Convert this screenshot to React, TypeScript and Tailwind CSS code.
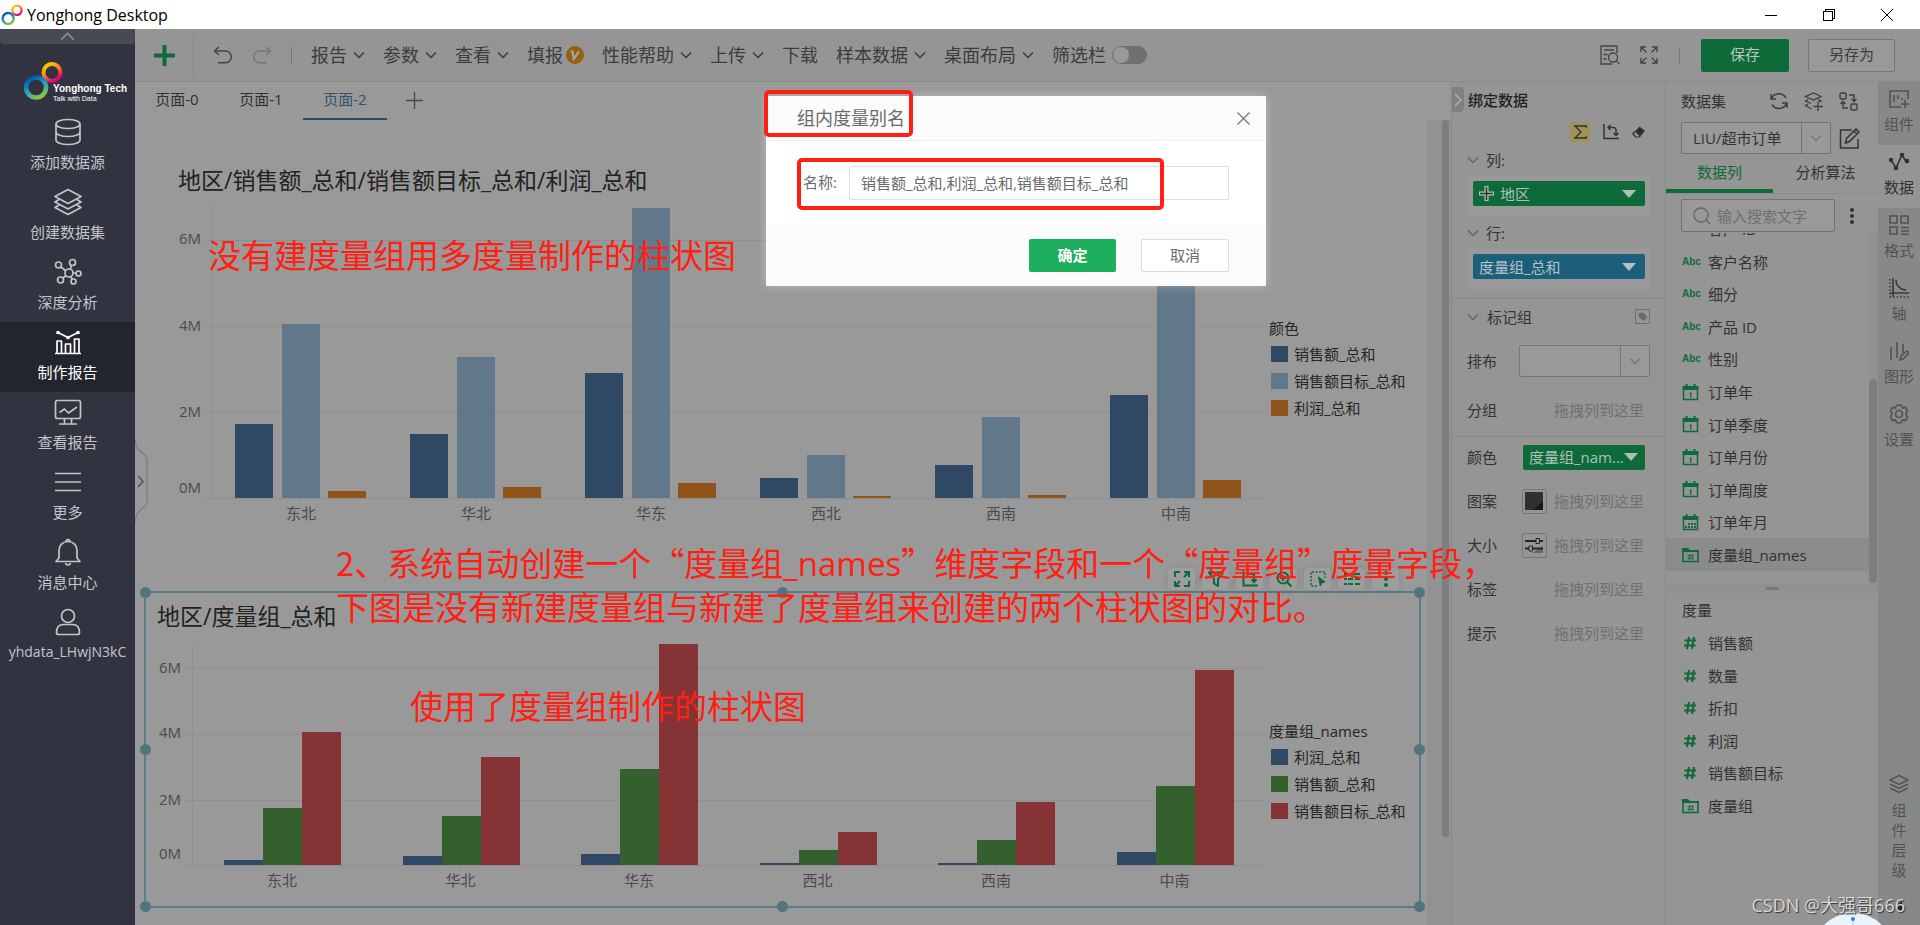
import type { ReactNode } from 'react';

const GREEN = '#0f6a39';

const sideItems = [
  { label: '添加数据源', icon: 'db' },
  { label: '创建数据集', icon: 'layers' },
  { label: '深度分析', icon: 'nodes' },
  { label: '制作报告', icon: 'chart', active: true },
  { label: '查看报告', icon: 'monitor' },
  { label: '更多', icon: 'menu' },
  { label: '消息中心', icon: 'bell' },
];

const menus = [
  { label: '报告', arrow: true },
  { label: '参数', arrow: true },
  { label: '查看', arrow: true },
  { label: '填报', badge: true },
  { label: '性能帮助', arrow: true },
  { label: '上传', arrow: true },
  { label: '下载' },
  { label: '样本数据', arrow: true },
  { label: '桌面布局', arrow: true },
];

const dimensions = [
  { label: '客户 ID', icon: 'abc' },
  { label: '客户名称', icon: 'abc' },
  { label: '细分', icon: 'abc' },
  { label: '产品 ID', icon: 'abc' },
  { label: '性别', icon: 'abc' },
  { label: '订单年', icon: 'date' },
  { label: '订单季度', icon: 'date' },
  { label: '订单月份', icon: 'date' },
  { label: '订单周度', icon: 'date' },
  { label: '订单年月', icon: 'month' },
  { label: '度量组_names', icon: 'group', active: true },
];

const measures = [
  { label: '销售额', icon: 'num' },
  { label: '数量', icon: 'num' },
  { label: '折扣', icon: 'num' },
  { label: '利润', icon: 'num' },
  { label: '销售额目标', icon: 'num' },
  { label: '度量组', icon: 'group' },
];

const railItems = [
  { label: '组件', icon: 'widget' },
  { label: '数据', icon: 'data', active: true },
  { label: '格式', icon: 'format' },
  { label: '轴', icon: 'axis' },
  { label: '图形', icon: 'graph' },
  { label: '设置', icon: 'gear' },
];

type Chart = {
  width: number;
  height: number;
  axisX: number;
  right: number;
  base: number;
  grid: { label: string; y: number; textY: number }[];
  first: number;
  pitch: number;
  offsets: number[];
  barWidth: number;
  colors: string[];
  // bar heights per region, in px above the base line
  bars: number[][];
};

const regions = ['东北', '华北', '华东', '西北', '西南', '中南'];

const topChart: Chart = {
  width: 1090,
  height: 325,
  axisX: 37,
  right: 1089,
  base: 298,
  grid: [
    { label: '6M', y: 40, textY: 44 },
    { label: '4M', y: 126, textY: 131 },
    { label: '2M', y: 212, textY: 217 },
    { label: '0M', y: 298, textY: 293 },
  ],
  first: 125,
  pitch: 175,
  offsets: [-65, -18, 28],
  barWidth: 38,
  colors: ['#2f4863', '#61788b', '#90541a'],
  bars: [
    [74, 174, 7],
    [64, 141, 11],
    [125, 290, 15],
    [20, 43, 2],
    [33, 81, 3],
    [103, 256, 18],
  ],
};

const bottomChart: Chart = {
  width: 1110,
  height: 250,
  axisX: 37,
  right: 1110,
  base: 226,
  grid: [
    { label: '6M', y: 29, textY: 34 },
    { label: '4M', y: 95, textY: 99 },
    { label: '2M', y: 161, textY: 166 },
    { label: '0M', y: 226, textY: 220 },
  ],
  first: 126,
  pitch: 178.5,
  offsets: [-57, -18, 21],
  barWidth: 39,
  colors: ['#2f4863', '#34602d', '#853335'],
  bars: [
    [5, 57, 133],
    [9, 49, 108],
    [11, 96, 221],
    [2, 15, 33],
    [2, 25, 63],
    [13, 79, 195],
  ],
};

function BarChart({ chart, label }: { chart: Chart; label: string }) {
  return (
    <svg width={chart.width} height={chart.height} role="img" aria-label={label} className="block shrink-0">
      <g stroke="#8f8f8f" shapeRendering="crispEdges">
        <path d={`M${chart.axisX} 6V${chart.base}`} />
        {chart.grid.map((line) => (
          <path key={line.label} d={`M${chart.axisX - 6} ${line.y}H${chart.right}`} />
        ))}
      </g>
      <g fill="#4b4b4b" fontSize="15">
        {chart.grid.map((line) => (
          <text key={line.label} x="4" y={line.textY}>
            {line.label}
          </text>
        ))}
      </g>
      {regions.map((region, i) => {
        const center = chart.first + chart.pitch * i;
        return (
          <g key={region}>
            <path d={`M${Math.round(center)} ${chart.base}v5`} stroke="#8f8f8f" shapeRendering="crispEdges" />
            {chart.bars[i].map((h, j) => (
              <rect
                key={j}
                x={Math.round(center + chart.offsets[j])}
                y={chart.base - h}
                width={chart.barWidth}
                height={h}
                fill={chart.colors[j]}
              />
            ))}
            <text x={center + 1} y={chart.base + 21} textAnchor="middle" fontSize="15" fill="#4b4b4b">
              {region}
            </text>
          </g>
        );
      })}
    </svg>
  );
}

function Legend({ title, items }: { title: string; items: { label: string; color: string }[] }) {
  return (
    <div className="text-[15px] leading-5 whitespace-nowrap text-[#262626]">
      <p className="mb-2 leading-4">{title}</p>
      <ul className="flex flex-col gap-[7px]">
        {items.map((item) => (
          <li key={item.label} className="flex items-center gap-1.5 pl-0.5">
            <span className="h-4 w-[17px]" style={{ backgroundColor: item.color }} />
            {item.label}
          </li>
        ))}
      </ul>
    </div>
  );
}

function Chevron({ className = '', size = 12 }: { className?: string; size?: number }) {
  return (
    <svg width={size} height={size} viewBox="0 0 12 12" fill="none" stroke="currentColor" strokeWidth="1.5" className={className}>
      <path d="M1 3.5l5 5 5-5" />
    </svg>
  );
}

function Caret() {
  return (
    <svg width="14" height="8" viewBox="0 0 14 8" fill="currentColor">
      <path d="M0 0h14L7 8z" />
    </svg>
  );
}

function Rings({ size, id }: { size: number; id: string }) {
  return (
    <svg width={size} height={size} viewBox="0 0 40 40" fill="none">
      <defs>
        <linearGradient id={`${id}-a`} x1="0" y1="0" x2="0.6" y2="1">
          <stop offset="0" stopColor="#ffd800" />
          <stop offset="0.45" stopColor="#f7941d" />
          <stop offset="1" stopColor="#e4006d" />
        </linearGradient>
        <linearGradient id={`${id}-b`} x1="0.2" y1="0" x2="0.7" y2="1">
          <stop offset="0" stopColor="#0054a5" />
          <stop offset="0.5" stopColor="#1f9fc4" />
          <stop offset="1" stopColor="#8cc63f" />
        </linearGradient>
      </defs>
      <circle cx="29" cy="11.5" r="8.5" stroke={`url(#${id}-a)`} strokeWidth="4" />
      <circle cx="13" cy="26.5" r="10" stroke={`url(#${id}-b)`} strokeWidth="4.5" />
    </svg>
  );
}

function SideIcon({ name }: { name: string }) {
  const shapes: Record<string, ReactNode> = {
    db: (
      <>
        <ellipse cx="14" cy="6" rx="12" ry="4.5" />
        <path d="M2 6v16c0 2.5 5.4 4.5 12 4.5s12-2 12-4.5V6M2 14c0 2.5 5.4 4.5 12 4.5s12-2 12-4.5" />
      </>
    ),
    layers: (
      <>
        <path d="M14 1.5l13 7-13 7-13-7z" />
        <path d="M5 11.5l-4 2.5 13 7 13-7-4-2.5M5 17l-4 2.5 13 7 13-7-4-2.5" />
      </>
    ),
    nodes: (
      <>
        <circle cx="15" cy="15" r="4" />
        <circle cx="4.5" cy="7" r="3" />
        <circle cx="18.5" cy="4.5" r="3" />
        <circle cx="24.5" cy="15.5" r="2.5" />
        <circle cx="6.5" cy="22" r="3" />
        <circle cx="19.5" cy="23.5" r="2.5" />
        <path d="M7 9l5 4M17.5 7.5l-1.5 4M19 15h3M9 20l3-2.5M16.5 18.5l2 3" />
      </>
    ),
    chart: (
      <>
        <path d="M1 25.5h26M3 25V13h4.5v12M11.5 25v-9h5v9M20.5 25V11H25v14" />
        <path d="M4 4.5l10 5 10-5" />
        <circle cx="4" cy="4.5" r="1" fill="currentColor" />
        <circle cx="14" cy="9.5" r="1" fill="currentColor" />
        <circle cx="24" cy="4.5" r="1" fill="currentColor" />
      </>
    ),
    monitor: (
      <>
        <rect x="1.5" y="2.5" width="25" height="18" rx="2" />
        <path d="M5.5 14.5l5-3.5 4 4 8.5-6M10.5 20.5v5M17.5 20.5v5M5 26h18" />
      </>
    ),
    menu: <path d="M1 5.500h26M1 14h26M1 22.500h26" />,
    bell: (
      <>
        <path d="M5 20v-8c0-4.5 3.5-8.5 9-8.5s9 4 9 8.5v8l3 3.5H2zM12 3.5c0-2.5 4-2.5 4 0" />
        <path d="M11.5 25c.5 2.5 4.5 2.5 5 0" />
      </>
    ),
    user: (
      <>
        <circle cx="14" cy="8" r="6.5" />
        <path d="M2.5 24.5c0-5.5 3-8 7-8h9c4 0 7 2.5 7 8 0 1-.5 2-2 2h-19c-1.5 0-2-1-2-2z" />
      </>
    ),
  };
  return (
    <svg width="28" height="28" viewBox="0 0 28 28" fill="none" stroke="currentColor" strokeWidth="1.7" strokeLinejoin="round">
      {shapes[name]}
    </svg>
  );
}

function Sidebar() {
  return (
    <nav className="flex w-[135px] shrink-0 flex-col bg-[#313440] text-[#c3c4c8]">
      <button aria-label="收起" className="flex h-[15px] items-center justify-center rounded-b-sm bg-[#474a55] text-[#85878f]">
        <Chevron className="rotate-180" size={15} />
      </button>
      <div className="relative flex h-[68px] items-start pt-[17px] pl-[23px]">
        <Rings size={40} id="logo" />
        <div className="absolute top-[40px] left-[53px] whitespace-nowrap text-white">
          <p className="font-['Liberation_Sans_Narrow','Liberation_Sans'] text-[10px] leading-[10px] font-bold">Yonghong Tech</p>
          <p className="font-['Liberation_Sans'] text-[7px] leading-[9px]">Talk with Data</p>
        </div>
      </div>
      {sideItems.map((item) => (
        <a
          key={item.label}
          href="#"
          className={
            item.active
              ? 'flex h-[70px] flex-col items-center gap-1.5 bg-[#22252e] pt-1.5 text-[15px] leading-5 text-white'
              : 'flex h-[70px] flex-col items-center gap-1.5 pt-1.5 text-[15px] leading-5'
          }
        >
          <SideIcon name={item.icon} />
          {item.label}
        </a>
      ))}
      <a href="#" className="flex h-[70px] flex-col items-center gap-1.5 pt-1.5 text-sm leading-5">
        <SideIcon name="user" />
        yhdata_LHwjN3kC
      </a>
    </nav>
  );
}

function Toolbar() {
  return (
    <header className="flex h-[53px] shrink-0 items-center border-b border-[#8a8a8a] bg-[#959595] text-lg text-[#3c3c3c]">
      <button aria-label="新建" className="flex h-11 w-[59px] items-center justify-center border-r border-[#898989] text-[#0f6a39]">
        <svg width="21" height="21" viewBox="0 0 21 21" stroke="currentColor" strokeWidth="4">
          <path d="M0 10.5h21M10.5 0v21" />
        </svg>
      </button>
      <button aria-label="撤销" className="ml-[19px]">
        <svg width="20" height="18" viewBox="0 0 20 18" fill="none" stroke="#454545" strokeWidth="1.5">
          <path d="M6 1L1.5 5 6 9M2 5h10.500a5.800 5.800 0 010 11.700H5" />
        </svg>
      </button>
      <button aria-label="重做" className="ml-[19px]">
        <svg width="20" height="18" viewBox="0 0 20 18" fill="none" stroke="#777" strokeWidth="1.5">
          <path d="M14 1l4.500 4L14 9M18 5H7.500a5.800 5.800 0 000 11.700H15" />
        </svg>
      </button>
      <span className="mx-[19px] h-[17px] w-px bg-[#777]" />
      <div className="flex items-center gap-[18px] whitespace-nowrap">
        {menus.map((menu) => (
          <button key={menu.label} className="flex items-center">
            {menu.label}
            {menu.arrow && <Chevron className="ml-1.5" />}
            {menu.badge && (
              <svg width="18" height="18" viewBox="0 0 18 18" className="ml-[3px]">
                <circle cx="9" cy="9" r="9" fill="#96600f" />
                <path d="M4.500 5.500h2l1.200 7.500 5.300-7.500" fill="none" stroke="#a5a5a0" strokeWidth="2.200" />
              </svg>
            )}
          </button>
        ))}
        <label className="flex items-center gap-1.5">
          筛选栏
          <input type="checkbox" role="switch" className="peer sr-only" />
          <span className="flex h-[18px] w-[35px] items-center rounded-full bg-[#707070] p-px">
            <span className="size-4 rounded-full bg-[#999]" />
          </span>
        </label>
      </div>
      <div className="ml-auto flex items-center pr-[25px]">
        <button aria-label="预览">
          <svg width="20" height="20" viewBox="0 0 20 20" fill="none" stroke="#444" strokeWidth="1.300">
            <path d="M17 8V1H1v18h11M4 5h10M3.500 9.500h4M3.500 14h3" />
            <circle cx="13" cy="12.5" r="4.5" />
            <path d="M16.500 16l3 3" />
          </svg>
        </button>
        <button aria-label="全屏" className="ml-5">
          <svg width="18" height="18" viewBox="0 0 18 18" fill="none" stroke="#444" strokeWidth="1.400">
            <path d="M1 6V1h5M1 1l5.500 5.500M12 1h5v5M17 1l-5.500 5.500M1 12v5h5M1 17l5.500-5.500M12 17h5v-5M17 17l-5.500-5.500" />
          </svg>
        </button>
        <span className="mx-[21px] h-[17px] w-px bg-[#7a7a7a]" />
        <button className="h-[33px] w-[88px] rounded-xs bg-[#0f6a39] text-[15px] text-[#b9c7be]">保存</button>
        <button className="ml-[19px] h-[33px] w-[87px] rounded-xs border border-[#777] bg-[#999] text-[15px]">另存为</button>
      </div>
    </header>
  );
}

const chartTools: { name: string; shape: ReactNode }[] = [
  {
    name: '放大',
    shape: <path d="M1 6V1h5M10 1h5v5M15 10v5h-5M6 15H1v-5M10 6l4-4M6 10l-4 4" />,
  },
  { name: '筛选', shape: <path d="M1 1.500h14L10 8v7l-4-2.500V8z" /> },
  { name: '坐标轴', shape: <path d="M1.500 0v14.500H16M5 3h7v8M9.500 8.500L12 11l2.500-2.500" /> },
  {
    name: '缩放',
    shape: (
      <>
        <circle cx="7" cy="7" r="5.500" />
        <path d="M11 11l4.500 4.500M7 4v6M4 7h6" />
      </>
    ),
  },
  {
    name: '选择',
    shape: (
      <>
        <path d="M7 15H1V1h14v6" strokeDasharray="2 1.500" strokeWidth="1.500" />
        <path d="M8.500 6l6.500 5-3 .7-1.700 3.300z" fill="currentColor" strokeWidth="1" />
      </>
    ),
  },
  { name: '列表', shape: <path d="M0 3h3M4 3h12M0 8h3M4 8h5M11 8h5M0 13h3M4 13h5M11 13h5" /> },
  {
    name: '更多',
    shape: (
      <g fill="currentColor" stroke="none">
        <circle cx="8" cy="2" r="2" />
        <circle cx="8" cy="8" r="2" />
        <circle cx="8" cy="14" r="2" />
      </g>
    ),
  },
];

const handles = [
  '-top-1.5 -left-1.5',
  '-top-1.5 left-1/2 -ml-1.5',
  '-top-1.5 -right-1.5',
  'top-1/2 -left-1.5 -mt-1.5',
  'top-1/2 -right-1.5 -mt-1.5',
  '-bottom-1.5 -left-1.5',
  '-bottom-1.5 left-1/2 -ml-1.5',
  '-bottom-1.5 -right-1.5',
];

function Canvas() {
  return (
    <main className="relative flex min-w-0 flex-1 flex-col bg-[#999]">
      <div className="flex h-[38px] shrink-0 text-[15px] text-[#303030]">
        {['页面-0', '页面-1', '页面-2'].map((tab, i) => (
          <button
            key={tab}
            className={
              i === 2
                ? 'w-[84px] border-b-2 border-[#2d4a68] pb-0.5 text-[#34506e]'
                : 'w-[84px] pb-1'
            }
          >
            {tab}
          </button>
        ))}
        <button aria-label="添加页面" className="ml-[19px] pb-0.5">
          <svg width="17" height="17" viewBox="0 0 17 17" stroke="#484848" strokeWidth="1.300">
            <path d="M0 8.500h17M8.500 0v17" />
          </svg>
        </button>
      </div>
      <div className="flex min-h-0 flex-1">
        <div className="relative min-w-0 flex-1">
          <section className="absolute top-[43px] left-[43px]">
            <h2 className="text-[23px] leading-[34px] text-[#222]">地区/销售额_总和/销售额目标_总和/利润_总和</h2>
            <div className="-ml-[3px] flex gap-1 pt-[3px]">
              <BarChart chart={topChart} label="地区销售额" />
              <div className="pt-[120px]">
                <Legend
                  title="颜色"
                  items={[
                    { label: '销售额_总和', color: '#2f4863' },
                    { label: '销售额目标_总和', color: '#61788b' },
                    { label: '利润_总和', color: '#90541a' },
                  ]}
                />
              </div>
            </div>
          </section>

          <section className="absolute top-[471px] left-[9px] h-[317px] w-[1277px] border-2 border-[#5a7d87]">
            <h2 className="pt-1.5 pl-[11px] text-[23px] leading-[34px] text-[#222]">地区/度量组_总和</h2>
            <div className="flex gap-1 pt-1.5 pl-[9px]">
              <BarChart chart={bottomChart} label="地区度量组" />
              <div className="pt-[84px]">
                <Legend
                  title="度量组_names"
                  items={[
                    { label: '利润_总和', color: '#2f4863' },
                    { label: '销售额_总和', color: '#34602d' },
                    { label: '销售额目标_总和', color: '#853335' },
                  ]}
                />
              </div>
            </div>
            {handles.map((pos) => (
              <span key={pos} className={`absolute size-[11px] rounded-full bg-[#50757f] ${pos}`} />
            ))}
            <div className="absolute -top-[25px] right-5 flex gap-[7px]">
              {chartTools.map((tool) => (
                <button
                  key={tool.name}
                  aria-label={tool.name}
                  className="flex h-[22px] w-[27px] items-center justify-center rounded-sm bg-[#9d9d9d] text-[#0f6a39] shadow-[0_0_6px_rgba(0,0,0,0.12)]"
                >
                  <svg width="16" height="16" viewBox="0 0 16 16" fill="none" stroke="currentColor" strokeWidth="2">
                    {tool.shape}
                  </svg>
                </button>
              ))}
            </div>
          </section>
        </div>
        <div className="w-6 shrink-0 bg-[#929292] pl-[15px]">
          <div className="h-[717px] w-[7px] rounded-full bg-[#7e7e7e]" />
        </div>
      </div>
      <svg width="14" height="82" viewBox="0 0 14 82" fill="none" className="absolute top-[358px] left-0">
        <path d="M0 0c1 14 12 12 12 20v42c0 6-11 6-12 20" stroke="#7b7d84" strokeWidth="1.200" />
        <path d="M3 36l5 5.500L3 47" stroke="#555" strokeWidth="1.500" />
      </svg>
    </main>
  );
}

function DropRow({ label, children }: { label: string; children?: ReactNode }) {
  return (
    <div className="flex h-11 items-center pr-[21px] pl-[15px]">
      <span>{label}</span>
      <div className="ml-auto flex items-center gap-[7px]">
        {children}
        <span className="text-[#707070]">拖拽列到这里</span>
      </div>
    </div>
  );
}

function BindPanel() {
  return (
    <aside className="relative w-[214px] shrink-0 border-l border-[#8a8a8a] bg-[#959595] text-[15px] leading-5 whitespace-nowrap text-[#333]">
      <button aria-label="收起面板" className="absolute top-[5px] left-0 flex h-[25px] w-3 items-center justify-center rounded-r-sm bg-[#808080] text-[#aaa]">
        <Chevron className="shrink-0 -rotate-90" size={14} />
      </button>
      <h3 className="pt-2 pl-4 font-medium text-[#222]">绑定数据</h3>
      <div className="mt-2.5 flex h-6 items-center justify-end gap-[13px] pr-5">
        <button aria-label="汇总" className="flex size-5 items-center justify-center rounded-xs bg-[#a09157]">
          <svg width="13" height="14" viewBox="0 0 13 14" fill="none" stroke="#333" strokeWidth="1.400">
            <path d="M12.500 3V1H1l6 6-6 6h11.500v-2" />
          </svg>
        </button>
        <button aria-label="转置">
          <svg width="16" height="16" viewBox="0 0 16 16" fill="none" stroke="#333" strokeWidth="1.500">
            <path d="M1 0v14.500h15M5 3.500h5.500a2.500 2.500 0 012.500 2.500v5M7.500 1L5 3.500 7.500 6M10.500 9l2.500 2.500L15.500 9" />
          </svg>
        </button>
        <button aria-label="清除">
          <svg width="13" height="12" viewBox="0 0 13 12">
            <path d="M7.500 0.500l5.500 4.500-5 5.500L3 5.500z" fill="#2e2e2e" />
            <path d="M3 5.500L.8 8l3 3h3.500l1-1" fill="none" stroke="#2e2e2e" strokeWidth="1.200" />
          </svg>
        </button>
      </div>
      <div className="flex items-center gap-[7px] pt-1.5 pl-[15px]">
        <Chevron className="text-[#666]" />
        列:
      </div>
      <div className="mt-1.5 mr-[15px] ml-4 h-[41px] rounded-xs bg-[#999] p-[5px]">
        <button className="flex h-[25px] w-full items-center rounded-xs bg-[#0f6a39] px-1.5 text-[#aebfb5]">
          <svg width="15" height="15" viewBox="0 0 15 15" className="mr-1.5">
            <path d="M0 7.500h15M7.500 0v15" stroke="#b5c3bb" strokeWidth="4" />
            <path d="M1 7.500h13M7.500 1v13" stroke="#1d3b2a" strokeWidth="1.500" />
          </svg>
          地区
          <span className="mr-[3px] ml-auto">
            <Caret />
          </span>
        </button>
      </div>
      <div className="flex items-center gap-[7px] pt-1.5 pl-[15px]">
        <Chevron className="text-[#666]" />
        行:
      </div>
      <div className="mt-1.5 mr-[15px] ml-4 h-[41px] rounded-xs bg-[#999] p-[5px]">
        <button className="flex h-[25px] w-full items-center rounded-xs bg-[#1b5f7a] px-1.5 text-[#b3c2c9]">
          度量组_总和
          <span className="mr-[3px] ml-auto">
            <Caret />
          </span>
        </button>
      </div>
      <div className="mt-2 flex h-9 items-center gap-2 border-t border-[#898989] pr-[15px] pl-[15px]">
        <Chevron className="text-[#666]" />
        标记组
        <svg width="15" height="15" viewBox="0 0 15 15" className="ml-auto">
          <rect x=".5" y=".5" width="14" height="14" fill="none" stroke="#6f6f6f" />
          <path d="M3.500 4l4.500-.5 4.500 4.500-4 4-4.500-4z" fill="#6a6a6a" />
        </svg>
      </div>
      <div className="flex h-[54px] items-center pr-[15px] pl-[15px]">
        <label htmlFor="arrange">排布</label>
        <div className="relative ml-auto flex h-8 w-[131px] rounded-xs border border-[#767676] bg-[#999]">
          <select id="arrange" className="w-full appearance-none bg-transparent">
            <option />
          </select>
          <span className="pointer-events-none absolute top-0 right-0 flex h-full w-[29px] items-center justify-center border-l border-[#767676] text-[#777]">
            <Chevron />
          </span>
        </div>
      </div>
      <div className="h-[49px] border-b border-[#898989]">
        <DropRow label="分组" />
      </div>
      <div className="mb-0.5 flex h-10 items-center pr-5 pl-[15px]">
        颜色
        <button className="ml-auto flex h-[25px] w-[122px] items-center rounded-xs bg-[#0f6a39] pl-1.5 text-[#aebfb5]">
          度量组_nam...
          <span className="mr-[9px] ml-auto">
            <Caret />
          </span>
        </button>
      </div>
      <DropRow label="图案">
        <button aria-label="选择图案" className="flex size-[25px] items-center justify-center rounded-xs border border-[#777]">
          <svg width="18" height="18" viewBox="0 0 18 18">
            <path d="M0 0h18v18H0z" fill="#303030" />
            <path d="M18 9v9H8z" fill="#191919" />
          </svg>
        </button>
      </DropRow>
      <DropRow label="大小">
        <button aria-label="设置大小" className="flex size-[25px] items-center justify-center rounded-xs border border-[#777]">
          <svg width="18" height="18" viewBox="0 0 18 18">
            <path d="M18 10v7H7z" fill="#666" />
            <path d="M0 5h11M15 5h3M0 12.500h4M8 12.500h10" stroke="#252525" strokeWidth="2" />
            <path d="M11 2.500h3.500v5H11zM4 10h3.500v5H4z" fill="#999" stroke="#252525" />
          </svg>
        </button>
      </DropRow>
      <DropRow label="标签" />
      <DropRow label="提示" />
    </aside>
  );
}

function FieldIcon({ name }: { name: string }) {
  if (name === 'abc') {
    return <span className="w-[18px] font-['Liberation_Sans'] text-[10px] font-bold text-[#0f6a39]">Abc</span>;
  }
  if (name === 'num') {
    return (
      <svg width="18" height="14" viewBox="0 0 18 14" fill="none" stroke={GREEN} strokeWidth="2">
        <path d="M7 1L5 13M12 1l-2 12M2.500 4.500H14M2 9.500h11.500" />
      </svg>
    );
  }
  if (name === 'group') {
    return (
      <svg width="18" height="16" viewBox="0 0 18 16" fill="none" stroke={GREEN}>
        <path d="M1 4v10.500h15V4z" strokeWidth="1.600" />
        <path d="M0 1h6l2 2h9v2H0z" fill={GREEN} stroke="none" />
        <path d="M7.500 7l-.5 6M10.500 7l-.5 6M5.500 8.700H12M5.500 11.300H12" strokeWidth=".9" />
      </svg>
    );
  }
  return (
    <svg width="18" height="17" viewBox="0 0 18 17" fill="none" stroke={GREEN}>
      <path d="M1.500 4v11.500h14V4z" strokeWidth="1.500" />
      <path d="M.7 2h15.600v4H.7z" fill={GREEN} stroke="none" />
      <path d="M4.500 0v3M12.500 0v3" stroke={GREEN} strokeWidth="2" />
      {name === 'month' ? (
        <path d="M3 13h11M6 10h8" strokeWidth="2" strokeDasharray="2 1" />
      ) : (
        <path d="M7.500 9.500L8.800 9v5" strokeWidth="1.300" />
      )}
    </svg>
  );
}

function DataPanel() {
  return (
    <aside className="flex w-[213px] shrink-0 flex-col border-l border-[#8a8a8a] bg-[#959595] text-[15px] leading-5 whitespace-nowrap text-[#333]">
      <div className="flex h-10 shrink-0 items-center pr-5 pb-0.5 pl-[15px]">
        数据集
        <div className="ml-auto flex items-center gap-4 text-[#3e3e3e]">
          <button aria-label="刷新">
            <svg width="18" height="18" viewBox="0 0 18 18" fill="none" stroke="currentColor" strokeWidth="1.500">
              <path d="M1 2v5h5M1.500 7A8 8 0 0116 6M17 16v-5h-5M16.500 11A8 8 0 012 12.500" />
            </svg>
          </button>
          <button aria-label="新建数据集">
            <svg width="19" height="19" viewBox="0 0 19 19" fill="none" stroke="currentColor" strokeWidth="1.300">
              <path d="M9.500 1L17 4.500 9.500 8 1.500 4.500zM4 7.500L1.500 9l5.500 2.500M14 7.500l3 1.500-3.500 1.500M4 12l-2.500 1.500L7.500 17M9.500 14.500H19M14 10v9" />
            </svg>
          </button>
          <button aria-label="切换">
            <svg width="19" height="19" viewBox="0 0 19 19" fill="none" stroke="currentColor" strokeWidth="1.400">
              <rect x="1" y="1" width="6" height="6" rx="1" />
              <rect x="12" y="12" width="6" height="6" rx="1" />
              <path d="M10 3h5v6M12.500 7L15 9.500 17.500 7M9 16H4v-6M1.500 12L4 9.500 6.500 12" />
            </svg>
          </button>
        </div>
      </div>
      <div className="flex shrink-0 items-center gap-2 pl-[15px]">
        <div className="relative h-8 w-[150px] rounded-xs border border-[#727272] bg-[#999]">
          <select aria-label="数据集" className="h-full w-full appearance-none bg-transparent pl-[11px]">
            <option>LIU/超市订单</option>
          </select>
          <span className="pointer-events-none absolute top-0 right-0 flex h-full w-[29px] items-center justify-center border-l border-[#727272] text-[#777]">
            <Chevron />
          </span>
        </div>
        <button aria-label="编辑">
          <svg width="21" height="21" viewBox="0 0 21 21" fill="none" stroke="#333" strokeWidth="1.500">
            <path d="M13 2H1.500v18h17.500v-9M6.500 15l1-4.500L17 1l3 3-9.500 9.500zM15 3l3 3" />
          </svg>
        </button>
      </div>
      <div className="flex h-10 shrink-0 border-b border-[#8c8c8c]">
        <button className="w-[107px] border-b-4 border-[#0f6a39] text-[#0f6a39]">数据列</button>
        <button className="w-[105px] pb-1">分析算法</button>
      </div>
      <div className="mt-[5px] flex shrink-0 items-center pl-[15px]">
        <label className="flex h-[33px] w-[154px] items-center gap-1.5 rounded-xs border border-[#727272] bg-[#999] pl-[11px]">
          <svg width="18" height="18" viewBox="0 0 18 18" fill="none" stroke="#666" strokeWidth="1.400">
            <circle cx="8" cy="8" r="7" />
            <path d="M13 13l4 4" />
          </svg>
          <input
            type="search"
            aria-label="搜索"
            placeholder="输入搜索文字"
            className="w-[110px] bg-transparent outline-none placeholder:text-[#6f6f6f]"
          />
        </label>
        <button aria-label="更多" className="ml-[15px]">
          <svg width="4" height="16" viewBox="0 0 4 16" fill="#333">
            <circle cx="2" cy="2" r="2" />
            <circle cx="2" cy="8" r="2" />
            <circle cx="2" cy="14" r="2" />
          </svg>
        </button>
      </div>
      <div className="mt-px flex h-[351px] shrink-0">
        <div className="flex min-w-0 flex-1 flex-col justify-end overflow-hidden pb-[13px]">
          <ul className="flex h-[358px] shrink-0 flex-col">
            {dimensions.map((field) => (
              <li
                key={field.label}
                className={
                  field.active
                    ? 'flex flex-1 items-center gap-2 bg-[#898c8b] pl-4'
                    : 'flex flex-1 items-center gap-2 pl-4'
                }
              >
                <FieldIcon name={field.icon} />
                {field.label}
              </li>
            ))}
          </ul>
        </div>
        <div className="w-[9px] bg-[#919191] pt-[146px]">
          <div className="h-[204px] w-2 rounded-full bg-[#7e7e7e]" />
        </div>
      </div>
      <div className="flex h-[9px] shrink-0 items-center justify-center bg-[#919191]">
        <span className="h-[3px] w-[13px] rounded-full bg-[#777]" />
      </div>
      <p className="pt-[7px] pl-4">度量</p>
      <ul className="mt-[7px] flex h-[195px] shrink-0 flex-col">
        {measures.map((field) => (
          <li key={field.label} className="flex flex-1 items-center gap-2 pl-4">
            <FieldIcon name={field.icon} />
            {field.label}
          </li>
        ))}
      </ul>
    </aside>
  );
}

function RailIcon({ name }: { name: string }) {
  const shapes: Record<string, ReactNode> = {
    widget: <path d="M19 10V2H1v16h11M5 6v7M9 6v4M13 9v2M16 11v8M12 15h8" />,
    data: (
      <>
        <path d="M2 8l5 8 6-13 5 8" />
        <g fill="currentColor">
          <circle cx="2" cy="8" r="1.500" />
          <circle cx="7" cy="16" r="1.500" />
          <circle cx="13" cy="3" r="1.500" />
          <circle cx="18" cy="9" r="1.500" />
        </g>
      </>
    ),
    format: <path d="M1 1h7v7H1zM12 1h7v7h-7zM1 12h7v7H1zM12 12.500h8M12 16h8M12 19.300h8" />,
    axis: (
      <g stroke="#3a3a3a">
        <path d="M4 0v19M1 15h19M7 2c0 6 3 9 10 10" />
        <path d="M1 1v18h19" strokeDasharray="1.500 2" />
      </g>
    ),
    graph: <path d="M2 6v13M8 1v16M14 3v9M11 19l1-4 6-5 2 2-6 6z" />,
    gear: (
      <>
        <path d="M10 1l2.500.5 1 2.500 3-.5 2 3.500-1.500 2.500v1.500L18.500 13l-2 3.500-3-.5-1 2.500L10 19l-2.500-.5-1-2.500-3 .5-2-3.500L3 10.500V9L1.500 7l2-3.500 3 .5 1-2.500z" />
        <circle cx="10" cy="10" r="3.500" />
      </>
    ),
  };
  return (
    <svg width="20" height="20" viewBox="0 0 20 20" fill="none" stroke="currentColor" strokeWidth="1.600">
      {shapes[name]}
    </svg>
  );
}

function Rail() {
  return (
    <aside className="flex w-[42px] shrink-0 flex-col bg-[#868988] text-[15px] leading-5 text-[#525252]">
      {railItems.map((item) => (
        <button
          key={item.label}
          className={
            item.active
              ? 'flex h-[63px] shrink-0 flex-col items-center gap-[5px] bg-[#959595] pt-[7px] text-[#333]'
              : 'flex h-[63px] shrink-0 flex-col items-center gap-[5px] pt-[7px]'
          }
        >
          <RailIcon name={item.icon} />
          {item.label}
        </button>
      ))}
      <button className="mt-auto mb-[21px] flex flex-col items-center gap-1.5">
        <svg width="20" height="20" viewBox="0 0 20 20" fill="none" stroke="currentColor" strokeWidth="1.500">
          <path d="M10 1.500L19 6l-9 4.500L1 6zM1 10l9 4.500L19 10M1 14l9 4.500L19 14" />
        </svg>
        <span className="w-4">组件层级</span>
      </button>
      <button aria-label="折叠" className="mb-3 flex justify-center">
        <svg width="8" height="12" viewBox="0 0 8 12" fill="#222">
          <path d="M7 0v12L1 6z" />
        </svg>
      </button>
    </aside>
  );
}

function Modal() {
  return (
    <div
      role="dialog"
      aria-label="组内度量别名"
      className="absolute top-[96px] left-[766px] w-[500px] rounded-xs bg-white text-[15px] text-[#6a6a6a] shadow-[0_0_10px_rgba(255,255,255,0.35)]"
    >
      <div className="flex h-[45px] items-center justify-between border-b border-[#efefef] bg-[#fbfbfb] pr-4 pl-[31px]">
        <h3 className="text-lg">组内度量别名</h3>
        <button aria-label="关闭">
          <svg width="13" height="13" viewBox="0 0 13 13" stroke="#777" strokeWidth="1.300">
            <path d="M.5.5l12 12M12.500.5l-12 12" />
          </svg>
        </button>
      </div>
      <div className="flex h-[84px] items-center gap-3 pr-[37px] pl-[37px]">
        <label htmlFor="alias" className="shrink-0 pb-0.5">
          名称:
        </label>
        <input
          id="alias"
          defaultValue="销售额_总和,利润_总和,销售额目标_总和"
          className="h-[34px] min-w-0 flex-1 rounded-xs border border-[#dedede] px-[11px] pb-0.5"
        />
      </div>
      <div className="flex h-[61px] items-center justify-end gap-[25px] bg-[#fbfbfb] pr-[37px]">
        <button className="h-[33px] w-[87px] rounded-xs bg-[#1dae5e] font-bold text-white">确定</button>
        <button className="h-[33px] w-[88px] rounded-xs border border-[#dcdcdc] bg-white">取消</button>
      </div>
      <span className="pointer-events-none absolute -top-1.5 -left-0.5 h-[47px] w-[149px] rounded-[5px] border-4 border-[#ff2013]" />
      <span className="pointer-events-none absolute top-[62px] left-[31px] h-[52px] w-[367px] rounded-[5px] border-4 border-[#ff2013]" />
    </div>
  );
}

function Notes() {
  return (
    <div className="pointer-events-none font-['Noto_Sans_CJK_SC',sans-serif] text-[33px] leading-[43px] whitespace-nowrap text-[#ff2013]">
      <p className="absolute top-[233px] left-[208px]">没有建度量组用多度量制作的柱状图</p>
      <p className="absolute top-[541px] left-[336px]">
        2、系统自动创建一个“度量组<span className="font-['Open_Sans']">_names</span>”维度字段和一个“度量组”度量字段，
        <br />
        下图是没有新建度量组与新建了度量组来创建的两个柱状图的对比。
      </p>
      <p className="absolute top-[684px] left-[410px]">使用了度量组制作的柱状图</p>
    </div>
  );
}

export default function App() {
  return (
    <div
      lang="zh-CN"
      className="relative flex h-screen flex-col overflow-hidden font-['Open_Sans','Noto_Sans_CJK_SC',sans-serif]"
    >
      <div className="flex h-[29px] shrink-0 items-center bg-white pl-px text-black">
        <Rings size={22} id="app" />
        <h1 className="ml-1 text-base">Yonghong Desktop</h1>
        <div className="ml-auto flex items-center gap-[46px] pr-[27px]">
          <button aria-label="最小化">
            <svg width="12" height="12" stroke="#000" shapeRendering="crispEdges">
              <path d="M0 6h12" />
            </svg>
          </button>
          <button aria-label="还原">
            <svg width="12" height="12" fill="none" stroke="#000" shapeRendering="crispEdges">
              <path d="M.5 2.500h9v9h-9zM2.500 2V.5h9v9H10" />
            </svg>
          </button>
          <button aria-label="关闭窗口">
            <svg width="12" height="12" stroke="#000">
              <path d="M0 0l12 12M12 0L0 12" />
            </svg>
          </button>
        </div>
      </div>
      <div className="flex min-h-0 flex-1">
        <Sidebar />
        <div className="flex min-w-0 flex-1 flex-col">
          <Toolbar />
          <div className="flex min-h-0 flex-1">
            <Canvas />
            <BindPanel />
            <DataPanel />
            <Rail />
          </div>
        </div>
      </div>
      <Modal />
      <Notes />
      <svg width="84" height="24" viewBox="0 0 84 24" className="absolute right-[25px] bottom-0">
        <circle cx="42" cy="53" r="41" fill="#e9f3fc" />
        <path d="M42 18v6" stroke="#9cc8f5" />
        <circle cx="42" cy="18" r="2" fill="#1f86f0" />
      </svg>
      <p className="absolute right-[15px] bottom-2 text-lg leading-6 text-[#d8d8d8] [text-shadow:1px_1px_1px_#333]">CSDN @大强哥666</p>
    </div>
  );
}
